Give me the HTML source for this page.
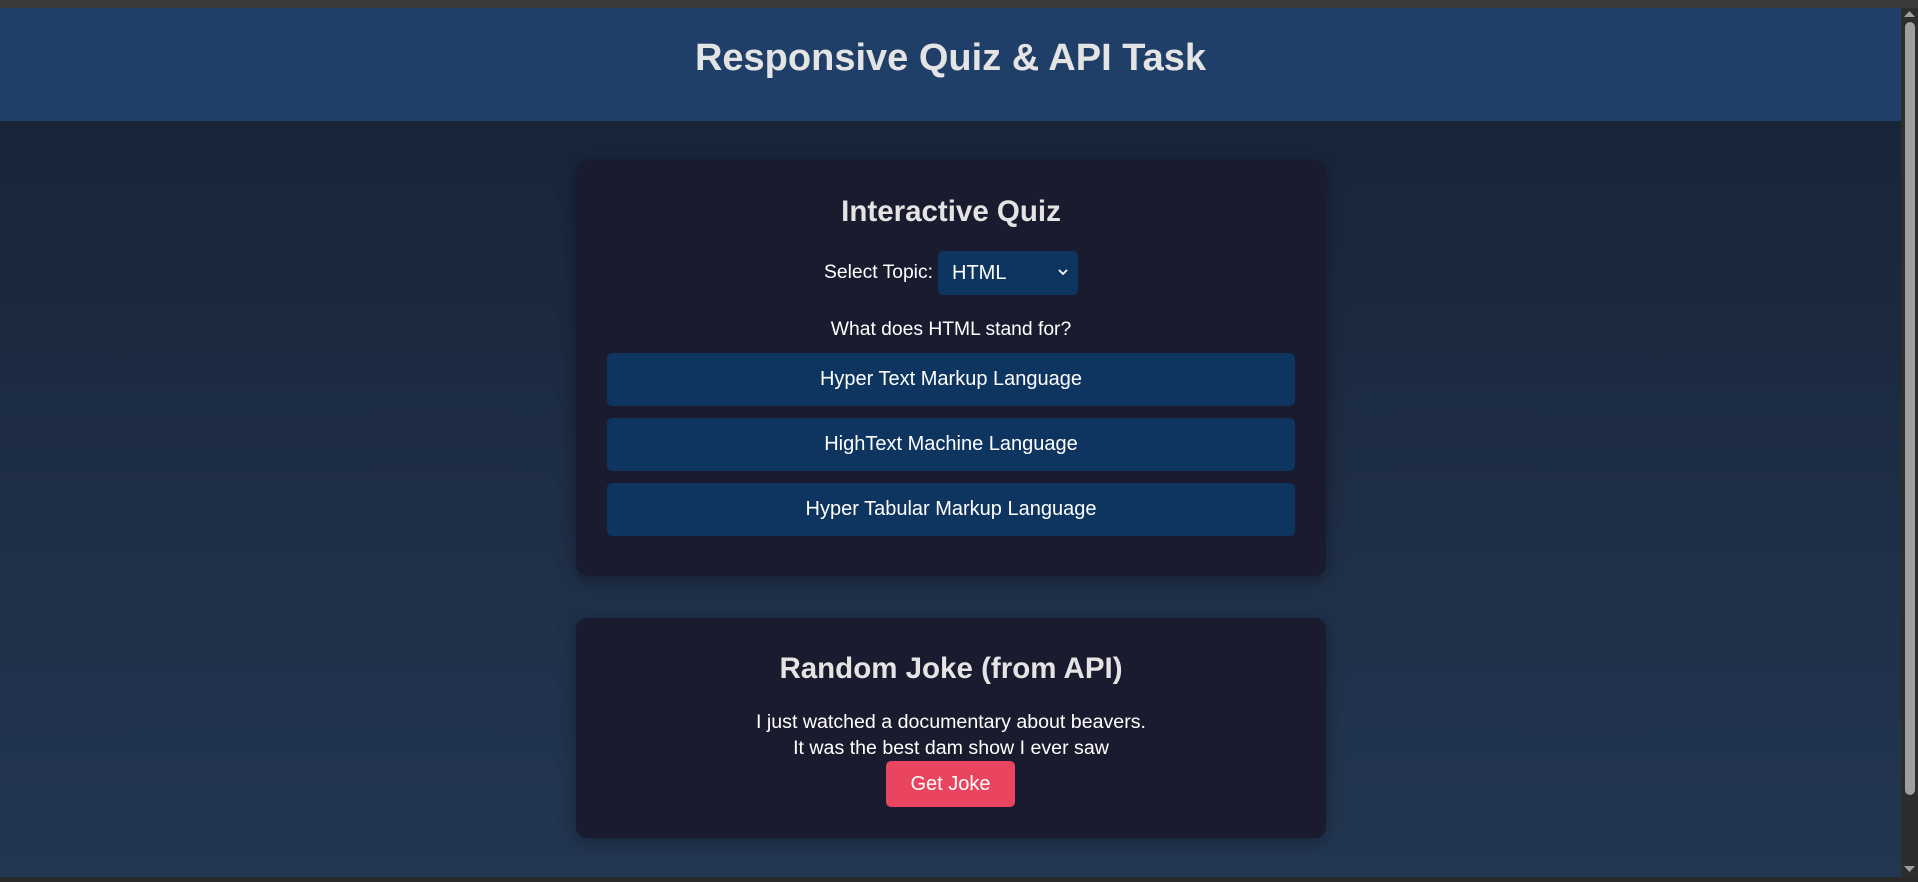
<!DOCTYPE html>
<html><head><style>
*{box-sizing:border-box;margin:0;padding:0}
html,body{width:1918px;height:882px;overflow:hidden}
body{font-family:"Liberation Sans",sans-serif;color:#e6e6e6;position:relative;background:linear-gradient(#172235,#233752)}
.topbar{position:absolute;left:0;top:0;width:1918px;height:8px;background:#3b3b3b}
.bot{position:absolute;left:0;top:877px;width:1918px;height:5px;background:#2b2b2b}
header{position:absolute;left:0;top:8px;width:1901px;height:113px;background:#1f3f68;text-align:center}
header h1{font-size:38px;line-height:100px;font-weight:bold;color:#e4e4e4}
.card{position:absolute;left:576px;width:750px;background:#1b1b2f;border-radius:11px;box-shadow:0 4px 18px rgba(0,0,0,.35);text-align:center}
h2{font-size:29.5px;font-weight:bold;color:#e4e4e4;position:absolute;left:0;width:100%}
.lbl{position:absolute;font-size:19.3px;color:#fff}
.sel{position:absolute;left:362px;top:91px;width:140px;height:44px;background:#0e3460;border-radius:5px;color:#fff;font-size:20px;text-align:left;padding-left:14px;line-height:44px}
.sel svg{position:absolute;right:10px;top:18px}
.opt{position:absolute;left:31px;width:688px;height:53px;background:#0e3460;border-radius:5px;color:#fff;font-size:20px;line-height:53px}
.jt{position:absolute;left:0;width:100%;font-size:19.6px;color:#fff}
.btn{position:absolute;left:310px;top:143px;width:129px;height:46px;background:#e94560;border-radius:5px;color:#fff;font-size:20px;line-height:46px}
.sb{position:absolute;left:1901px;top:8px;width:17px;height:869px;background:#2d2d2d}
.th{position:absolute;left:4px;top:14px;width:10px;height:773px;background:#9f9f9f;border-radius:5px}
</style></head><body>
<div class="topbar"></div>
<header><h1>Responsive Quiz &amp; API Task</h1></header>
<div class="card" style="top:160px;height:416px">
<h2 style="top:35px">Interactive Quiz</h2>
<div class="lbl" style="left:248px;top:102px">Select Topic:</div>
<div class="sel">HTML<svg width="10" height="7" viewBox="0 0 10 7"><path d="M1 1l4 4 4-4" stroke="#fff" stroke-width="1.8" fill="none"/></svg></div>
<div class="lbl" style="left:0;width:100%;top:159px">What does HTML stand for?</div>
<div class="opt" style="top:193px">Hyper Text Markup Language</div>
<div class="opt" style="top:258px">HighText Machine Language</div>
<div class="opt" style="top:323px">Hyper Tabular Markup Language</div>
</div>
<div class="card" style="top:618px;height:220px">
<h2 style="top:34px">Random Joke (from API)</h2>
<div class="jt" style="top:93px">I just watched a documentary about beavers.</div>
<div class="jt" style="top:119px">It was the best dam show I ever saw</div>
<div class="btn">Get Joke</div>
</div>
<div class="sb"><div class="th"></div>
<svg style="position:absolute;left:3px;top:3px" width="11" height="7"><path d="M0 6L5.5 0 11 6z" fill="#9f9f9f"/></svg>
<svg style="position:absolute;left:3px;top:858px" width="11" height="7"><path d="M0 0L5.5 6 11 0z" fill="#9f9f9f"/></svg>
</div>
<div class="bot"></div>
</body></html>
